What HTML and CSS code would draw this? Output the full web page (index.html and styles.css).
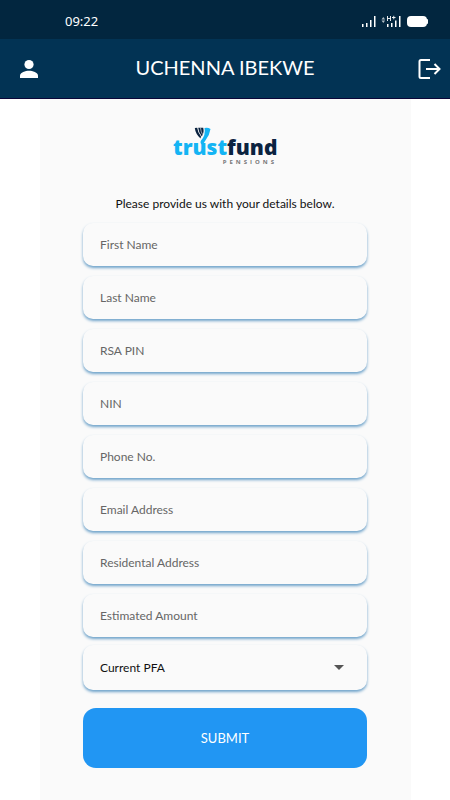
FILE: index.html
```html
<!DOCTYPE html>
<html lang="en">
<head>
<meta charset="utf-8">
<meta name="viewport" content="width=device-width, initial-scale=1">
<title>Trustfund Pensions</title>
<link rel="stylesheet" href="styles.css">
</head>
<body>
<div class="status">
  <time class="clock">09:22</time>
  <svg class="status-icons" width="68" height="14" viewBox="0 0 68 14" fill="#fff" aria-hidden="true">
    <path d="M1 10h1.500v3H1zM5 9h1.500v4H5zM9 6h1.500v7H9zM13 2h1.500v11H13z"/>
    <path d="M20.500 5.500l1.800-2.500 1.800 2.500zM20.500 6.500l1.800 2.500 1.800-2.500z" opacity=".7"/>
    <path d="M26.500 2v5M29.500 2v5M26.500 4.500h3M31 3.500h3.500M32.750 1.800v3.500" fill="none" stroke="#fff" stroke-width=".9"/>
    <path d="M26 10h1.500v3H26zM30 9h1.500v4H30zM34 6.500h1.500V13H34zM38 2h1.500v11H38z"/>
    <rect x="46" y="2" width="20" height="11" rx="4"/>
    <rect x="65" y="5" width="2" height="5" rx="1"/>
  </svg>
</div>
<header class="bar">
  <button class="icon-button profile" type="button" aria-label="Profile">
    <svg width="24" height="24" viewBox="0 0 24 24" fill="#fff"><circle cx="12" cy="7.500" r="4.600"/><path d="M3 21v-2.200c0-3.200 5.500-5 9-5s9 1.800 9 5V21z"/></svg>
  </button>
  <h1 class="title">UCHENNA IBEKWE</h1>
  <button class="icon-button logout" type="button" aria-label="Log out">
    <svg width="24" height="24" viewBox="0 0 24 24" fill="none" stroke="#fff" stroke-width="2"><path d="M13 3H4Q2.500 3 2.500 4.500v15Q2.500 21 4 21H13M9 12h13M17.500 7l5 5-5 5"/></svg>
  </button>
</header>
<main class="panel">
  <div class="logo">
    <div class="wordmark"><span class="trust">trust</span><span class="fund">fund</span></div>
    <div class="tagline">PENSIONS</div>
    <svg class="mark" width="18" height="20" viewBox="0 0 18 20" aria-hidden="true">
      <path d="M10.500 1Q14 .2 16.500 2 15.500 8 12 12.500L8.500 18Q5.500 16 7 13.500 12 8 10.500 1z" fill="#14b4f4"/>
      <path d="M.8 1L3.200.8Q3.500 5 7 9.500L6.500 11.500Q1.500 7 .8 1z" fill="#0b2340"/>
      <path d="M4.200.8L9.200.8Q10.500 5.500 7.800 9.500 4.500 5.500 4.200.8z" fill="#0b2340"/>
      <path d="M6.500.8Q6.800 4.500 8.500 7.500" fill="none" stroke="#fafafa" stroke-width=".6"/>
    </svg>
  </div>
  <p class="intro">Please provide us with your details below.</p>
  <form class="form">
    <div class="fields">
      <input class="field" type="text" placeholder="First Name" aria-label="First Name">
      <input class="field" type="text" placeholder="Last Name" aria-label="Last Name">
      <input class="field" type="text" placeholder="RSA PIN" aria-label="RSA PIN">
      <input class="field" type="text" placeholder="NIN" aria-label="NIN">
      <input class="field" type="tel" placeholder="Phone No." aria-label="Phone No.">
      <input class="field" type="email" placeholder="Email Address" aria-label="Email Address">
      <input class="field" type="text" placeholder="Residental Address" aria-label="Residental Address">
      <input class="field" type="text" placeholder="Estimated Amount" aria-label="Estimated Amount">
    </div>
    <div class="select-wrap">
      <select class="field select" aria-label="Current PFA"><option>Current PFA</option></select>
      <svg class="caret" width="10" height="5" viewBox="0 0 10 5" aria-hidden="true"><path d="M0 0h10L5 5z" fill="#555"/></svg>
    </div>
    <button class="submit" type="submit">SUBMIT</button>
  </form>
</main>
</body>
</html>
```
FILE: styles.css
```css
* { box-sizing: border-box; }

body {
  margin: 0;
  min-height: 100vh;
  display: flex;
  flex-direction: column;
  background: #fff;
  color: #111;
  font-family: Lato, "Open Sans", sans-serif;
}

.status {
  display: flex;
  align-items: center;
  justify-content: space-between;
  padding: 3px 21px 0 65px;
  height: 39px;
  background: #02263f;
  color: #fff;
}

.clock { font: 13px/20px "Noto Sans", sans-serif; }

.bar {
  display: grid;
  grid-template-columns: 1fr auto 1fr;
  align-items: center;
  height: 60px;
  padding: 0 9px;
  background: #023354;
  border-bottom: 1px solid #0a0638;
}

.icon-button {
  display: flex;
  padding: 0;
  border: 0;
  background: none;
}

.profile { padding-left: 8px; }
.logout { justify-self: end; }

.title {
  margin: 0;
  padding-bottom: 4px;
  color: #fff;
  font-size: 20px;
  line-height: 28px;
  font-weight: 400;
}

.panel {
  flex: 1;
  margin: 0 39px 0 40px;
  padding: 28px 44px 32px 43px;
  background: #fafafa;
}

.logo {
  position: relative;
  width: 104px;
  margin: 0 auto;
  padding-top: 9px;
}

.wordmark {
  font: 800 21px/22px "Open Sans", sans-serif;
  white-space: nowrap;
}

.trust { color: #14b4f4; }
.fund { color: #0b2340; }

.tagline {
  color: #777;
  font: 700 6px/8px "Open Sans", sans-serif;
  letter-spacing: 3px;
  text-align: right;
}

.mark {
  position: absolute;
  top: 0;
  left: 21px;
}

.intro {
  margin: 29px 0 10px;
  font-size: 12px;
  line-height: 18px;
  text-align: center;
}

.form {
  display: flex;
  flex-direction: column;
  gap: 8px;
}

.fields {
  display: grid;
  gap: 10px;
}

.field {
  width: 100%;
  height: 43px;
  padding: 0 17px;
  border: 0;
  border-radius: 10px;
  background: #fafafa;
  box-shadow: 0 2px 3px #6fa3ca;
  color: #111;
  font-family: inherit;
  font-size: 12px;
}

.field::placeholder { color: #666; opacity: 1; }

.select-wrap {
  position: relative;
  display: flex;
}

.select {
  height: 45px;
  appearance: none;
}

.caret {
  position: absolute;
  top: 20px;
  right: 23px;
  pointer-events: none;
}

.submit {
  height: 60px;
  margin-top: 10px;
  border: 0;
  border-radius: 13px;
  background: #2196f3;
  color: #fff;
  font-family: inherit;
  font-size: 13px;
}
```
